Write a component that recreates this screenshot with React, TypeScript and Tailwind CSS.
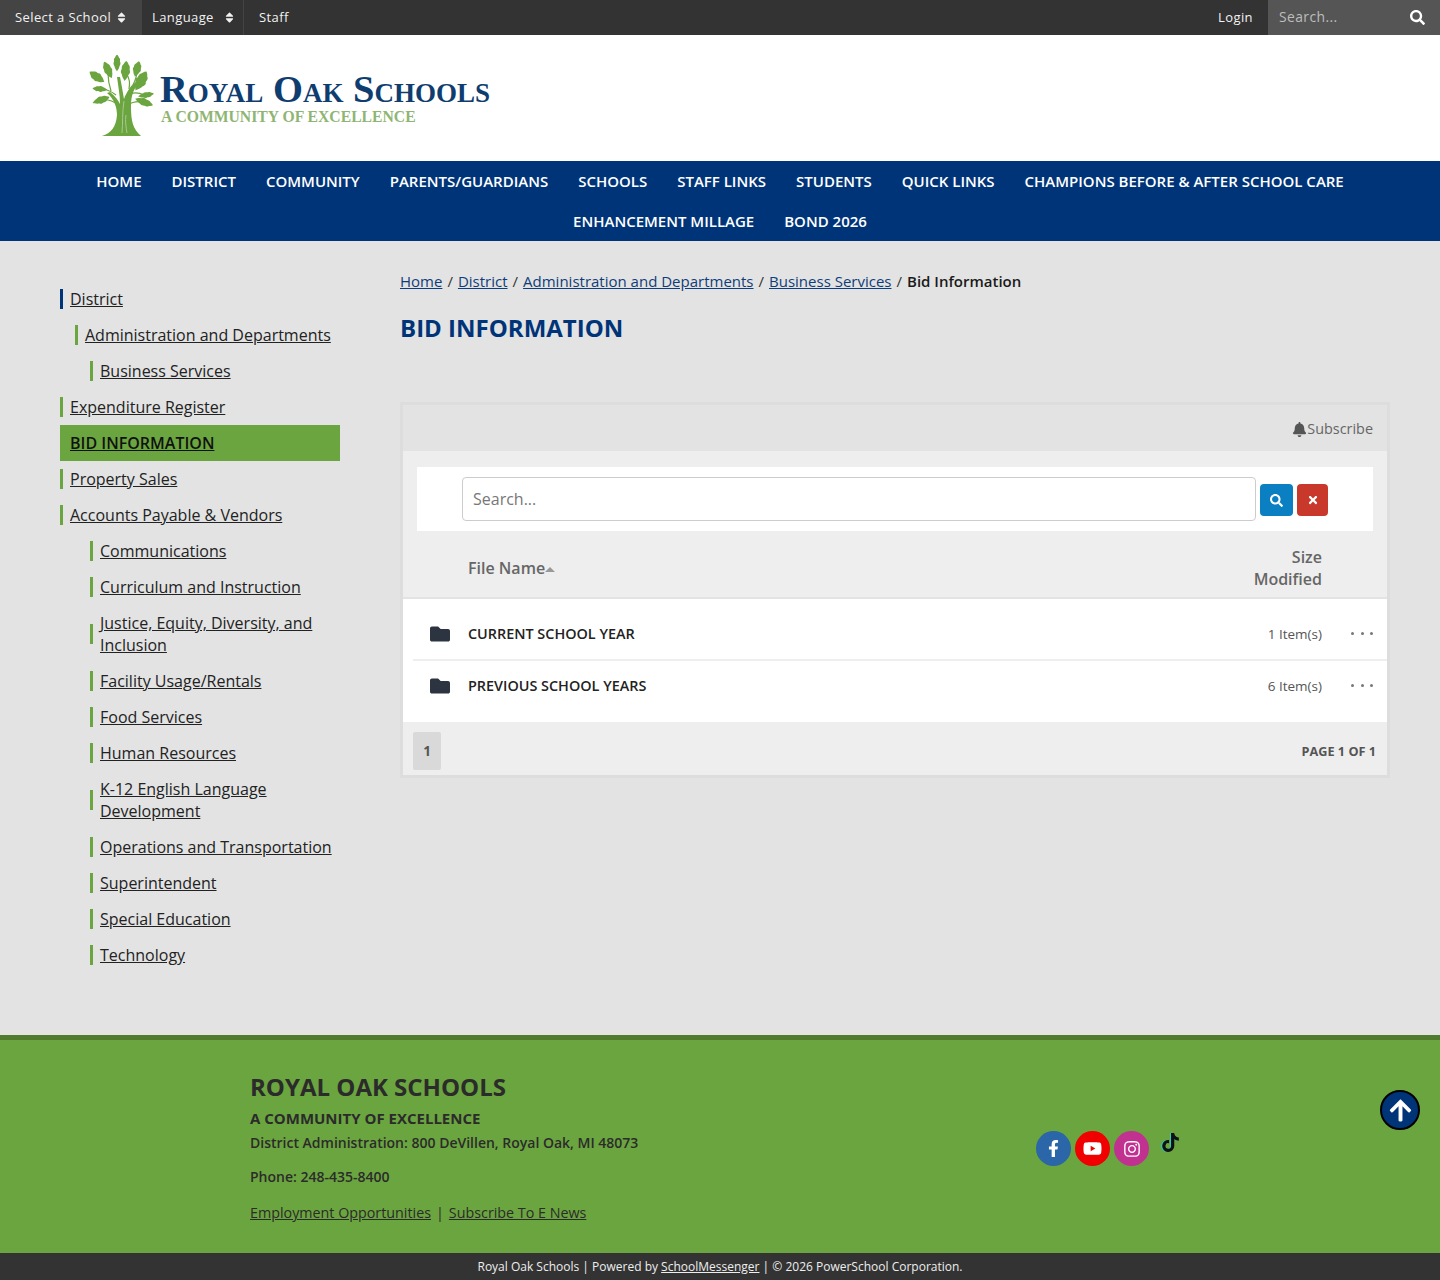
import {
  FaArrowUp,
  FaBell,
  FaFacebookF,
  FaFolder,
  FaInstagram,
  FaSearch,
  FaSort,
  FaTiktok,
  FaTimes,
  FaYoutube,
} from "react-icons/fa";

const navRows = [
  [
    "HOME",
    "DISTRICT",
    "COMMUNITY",
    "PARENTS/GUARDIANS",
    "SCHOOLS",
    "STAFF LINKS",
    "STUDENTS",
    "QUICK LINKS",
    "CHAMPIONS BEFORE & AFTER SCHOOL CARE",
  ],
  ["ENHANCEMENT MILLAGE", "BOND 2026"],
];

const sideItems = [
  { label: "District", level: 0, bar: "bg-[#003478]" },
  { label: "Administration and Departments", level: 1 },
  { label: "Business Services", level: 2 },
  { label: "Expenditure Register", level: 0 },
  { label: "BID INFORMATION", level: 0, active: true },
  { label: "Property Sales", level: 0 },
  { label: "Accounts Payable & Vendors", level: 0 },
  { label: "Communications", level: 2 },
  { label: "Curriculum and Instruction", level: 2 },
  { label: "Justice, Equity, Diversity, and Inclusion", level: 2 },
  { label: "Facility Usage/Rentals", level: 2 },
  { label: "Food Services", level: 2 },
  { label: "Human Resources", level: 2 },
  { label: "K-12 English Language Development", level: 2 },
  { label: "Operations and Transportation", level: 2 },
  { label: "Superintendent", level: 2 },
  { label: "Special Education", level: 2 },
  { label: "Technology", level: 2 },
];

const levelClass = ["ml-0", "ml-[15px]", "ml-[30px]"];

const crumbs = ["Home", "District", "Administration and Departments", "Business Services"];

const files = [
  { name: "CURRENT SCHOOL YEAR", size: "1 Item(s)", height: "h-[52px] border-b-[2px] border-[#eeeeee]" },
  { name: "PREVIOUS SCHOOL YEARS", size: "6 Item(s)", height: "h-[50px]" },
];

// x, y, half length, half width, rotation of each leaf cluster
const leaves = [
  [28, 8, 8.5, 3.8, 0],
  [19, 15, 9, 4.5, -25],
  [36.5, 16, 10, 5, 5],
  [48, 14, 8, 4.5, 15],
  [8, 22, 9, 4.8, -55],
  [52, 26, 11, 6, 30],
  [11, 34, 7.5, 3.2, -85],
  [57, 40, 8, 3.2, 80],
  [12, 45, 9, 4, 70],
  [55, 47, 9.5, 4, 110],
];

const leafPath =
  "M0-1C.45-.85.4-.65.7-.55.95-.35.65-.2.9-.02 1 .25.6.3.6.5.4.75.15.85 0 1-.15.85-.4.75-.6.5-.6.3-1 .25-.9-.02-.65-.2-.95-.35-.7-.55-.4-.65-.45-.85 0-1z";

const Logo = () => (
  <div className="ml-[89px] flex items-start">
    <svg width="67" height="84" viewBox="0 0 67 84" className="mt-[20px]" aria-hidden="true">
      <g fill="#6ba53f">
        {leaves.map(([x, y, h, w, r]) => (
          <path key={`${x}-${y}`} d={leafPath} transform={`translate(${x} ${y}) rotate(${r}) scale(${w} ${h})`} />
        ))}
        <path d="M13 81C22 78 27 72 28 60 28 52 25 44 18 38L21 37C26 41 29 45 31 49 31 40 29 30 28 22L31 22C33 32 34 38 35 44 38 36 42 30 47 27L49 29C43 36 42 44 42 52 42 66 44 74 52 81Z" />
      </g>
      <g stroke="#6ba53f" strokeWidth="1.2" fill="none">
        <path d="M30 50C24 46 18 44 13 45M39 50C44 46 49 46 55 47M36 42C41 38 47 36 55 40M27 40C22 36 17 34 11 34M22 36C20 30 19 24 19 18M40 34C41 28 41 24 37 18M44 30C46 26 48 22 48 16" />
      </g>
      <path d="M33 78C34 68 33 58 35 46M38 78C37 72 36 66 37 60" stroke="#a9c98f" strokeWidth="1" fill="none" />
    </svg>
    <div className="ml-[4px] mt-[33px] font-['Liberation_Serif',serif] font-bold">
      <div className="text-[38.5px] leading-[42px] text-[#0f3d70] whitespace-nowrap [font-variant:small-caps]">
        Royal Oak Schools
      </div>
      <div className="text-[15.7px] leading-[16px] text-[#8fb573] whitespace-nowrap -mt-[1px] ml-[1px]">
        A COMMUNITY OF EXCELLENCE
      </div>
    </div>
  </div>
);

const TopBar = () => (
  <div className="h-[35px] bg-[#333333] flex items-stretch text-[13px] tracking-[0.4px] text-[#f2f2f2]">
    <div className="w-[142px] bg-[#444444] flex items-center pl-[15px]">
      Select a School
      <FaSort className="ml-[4px] text-[13px]" />
    </div>
    <div className="w-[102px] flex items-center pl-[10px] border-r border-[#444444]">
      Language
      <FaSort className="ml-[9px] text-[13px]" />
    </div>
    <div className="flex items-center pl-[15px]">Staff</div>
    <div className="ml-auto flex items-center pr-[15px]">Login</div>
    <div className="w-[172px] bg-[#555555] flex items-center justify-between pl-[11px] pr-[15px]">
      <span className="text-[13.9px] text-[#bdbdbd]">Search...</span>
      <FaSearch className="text-[15px] text-white" />
    </div>
  </div>
);

const MainNav = () => (
  <nav className="h-[80px] bg-[#003478]">
    {navRows.map((row) => (
      <div key={row[0]} className="h-[40px] flex items-center justify-center gap-[30px]">
        {row.map((item) => (
          <span key={item} className="text-[15px] font-semibold text-white whitespace-nowrap">
            {item}
          </span>
        ))}
      </div>
    ))}
  </nav>
);

const Sidebar = () => (
  <aside className="w-[280px] shrink-0 pt-[40px]">
    {sideItems.map((item) =>
      item.active ? (
        <div key={item.label} className="h-[36px] bg-[#6ba53f] flex items-center pl-[10px]">
          <span className="text-[16px] font-semibold text-[#111111] underline">{item.label}</span>
        </div>
      ) : (
        <div key={item.label} className={`py-[7px] flex items-center ${levelClass[item.level]}`}>
          <div className="relative pl-[10px] text-[16px] leading-[22px] text-[#222222] underline">
            {item.label}
            <span className={`absolute left-0 top-1/2 -translate-y-1/2 h-[20px] w-[3px] ${item.bar ?? "bg-[#6ba53f]"}`} />
          </div>
        </div>
      )
    )}
  </aside>
);

const FilePanel = () => (
  <div className="mt-[58px] w-[990px] border-[3px] border-[#dddddd] bg-[#eeeeee]">
    <div className="h-[46px] pt-[2px] bg-[#e3e3e3] flex items-center justify-end pr-[14px] text-[14.4px] text-[#666666]">
      <FaBell className="text-[15px] text-[#555555]" />
      Subscribe
    </div>
    <div className="pt-[16px] px-[14px]">
      <div className="h-[64px] bg-white flex items-center pl-[45px]">
        <div className="w-[794px] h-[44px] border border-[#cccccc] rounded-[4px] flex items-center pl-[10px] text-[16px] text-[#777777]">
          Search...
        </div>
        <div className="ml-[4px] mt-[2px] w-[33px] h-[32px] rounded-[4px] bg-[#0a7fc2] flex items-center justify-center text-white text-[13px]">
          <FaSearch />
        </div>
        <div className="ml-[4px] mt-[2px] w-[31px] h-[32px] rounded-[4px] bg-[#c8392b] flex items-center justify-center text-white text-[12px]">
          <FaTimes />
        </div>
      </div>
    </div>
    <div className="h-[68px] pt-[8px] flex items-center px-[65px] border-b-[2px] border-[#e3e3e3] text-[16px] font-semibold text-[#666666]">
      <span>File Name</span>
      <svg width="10" height="5" viewBox="0 0 10 5" className="mt-[2px]" aria-hidden="true">
        <path d="M5 0l5 5H0z" fill="#999999" />
      </svg>
      <div className="ml-auto text-right leading-[22px]">
        <div>Size</div>
        <div>Modified</div>
      </div>
    </div>
    <div className="bg-white h-[123px] pt-[10px]">
      {files.map((file) => (
        <div key={file.name} className={`${file.height} ml-[10px] flex items-center`}>
          <FaFolder className="ml-[17px] text-[20px] text-[#2b3440]" />
          <span className="ml-[18px] text-[14.4px] font-semibold text-[#222222]">{file.name}</span>
          <span className="ml-auto text-[13.5px] text-[#555555]">{file.size}</span>
          <div className="ml-[29px] mr-[14px] mb-[2px] w-[22px] flex justify-between">
            <span className="w-[3px] h-[3px] rounded-full bg-[#777777]" />
            <span className="w-[3px] h-[3px] rounded-full bg-[#777777]" />
            <span className="w-[3px] h-[3px] rounded-full bg-[#777777]" />
          </div>
        </div>
      ))}
    </div>
    <div className="h-[53px] pt-[10px] pb-[5px] flex items-center pl-[10px] pr-[11px]">
      <div className="w-[28px] h-[38px] bg-[#d9d9d9] rounded-[2px] flex items-center justify-center text-[13.5px] font-bold text-[#555555]">
        1
      </div>
      <span className="ml-auto mt-[2px] text-[12.7px] font-bold text-[#555555]">PAGE 1 OF 1</span>
    </div>
  </div>
);

const Footer = () => (
  <footer className="relative h-[218px] bg-[#6ba53f] border-t-[5px] border-[#4f7a30] text-[#2b2b2b]">
    <div className="flex pl-[250px]">
      <div className="w-[786px] pt-[31px]">
        <div className="text-[24px] leading-[32px] font-bold">ROYAL OAK SCHOOLS</div>
        <div className="mt-[5px] text-[15px] leading-[20px] font-bold">A COMMUNITY OF EXCELLENCE</div>
        <div className="mt-[5px] text-[14px] leading-[20px] font-semibold">
          District Administration: 800 DeVillen, Royal Oak, MI 48073
        </div>
        <div className="mt-[14px] text-[14px] leading-[20px] font-semibold">Phone: 248-435-8400</div>
        <div className="mt-[16px] text-[14.3px] leading-[20px] font-medium">
          <span className="underline">Employment Opportunities</span>
          <span className="mx-[5px] font-normal">|</span>
          <span className="underline">Subscribe To E News</span>
        </div>
      </div>
      <div className="pt-[91px] flex gap-[4px] items-start">
        <div className="w-[35px] h-[35px] rounded-full bg-[#2a66a8] flex items-center justify-center text-white text-[17px]">
          <FaFacebookF />
        </div>
        <div className="w-[35px] h-[35px] rounded-full bg-[#f00000] flex items-center justify-center text-white text-[19px]">
          <FaYoutube />
        </div>
        <div className="w-[35px] h-[35px] rounded-full bg-[#c13290] flex items-center justify-center text-white text-[18px]">
          <FaInstagram />
        </div>
        <div className="w-[35px] h-[35px] flex justify-center pt-[2px] text-[#111111] text-[19px]">
          <FaTiktok className="drop-shadow-[-1px_0_0_#25d0d0]" />
        </div>
      </div>
    </div>
    <div className="absolute left-[1380px] top-[50px] w-[40px] h-[40px] rounded-full bg-[#003478] border-[2px] border-black flex items-center justify-center text-white text-[25px]">
      <FaArrowUp />
    </div>
  </footer>
);

const App = () => {
  return (
    <div className="min-h-[1280px] bg-[#e3e3e3] font-['Open_Sans','Noto_Sans',sans-serif]">
      <TopBar />
      <header className="h-[126px] bg-white">
        <Logo />
      </header>
      <MainNav />
      <main className="h-[794px] flex pl-[60px]">
        <Sidebar />
        <section className="ml-[60px] pt-[29px]">
          <div className="h-[22px] flex items-center text-[15px] text-[#1a1a1a] whitespace-nowrap">
            {crumbs.map((crumb) => (
              <span key={crumb} className="flex items-center">
                <span className="underline text-[#0f3d7a]">{crumb}</span>
                <span className="mx-[5px] text-[#333333]">/</span>
              </span>
            ))}
            <span className="font-semibold">Bid Information</span>
          </div>
          <h1 className="mt-[20px] text-[24px] leading-[32px] font-bold text-[#003478]">BID INFORMATION</h1>
          <FilePanel />
        </section>
      </main>
      <Footer />
      <div className="h-[27px] bg-[#333333] flex items-center justify-center text-[12px] text-[#eeeeee]">
        Royal Oak Schools | Powered by&nbsp;<span className="underline">SchoolMessenger</span>&nbsp;| © 2026 PowerSchool Corporation.
      </div>
    </div>
  );
};

export default App;
